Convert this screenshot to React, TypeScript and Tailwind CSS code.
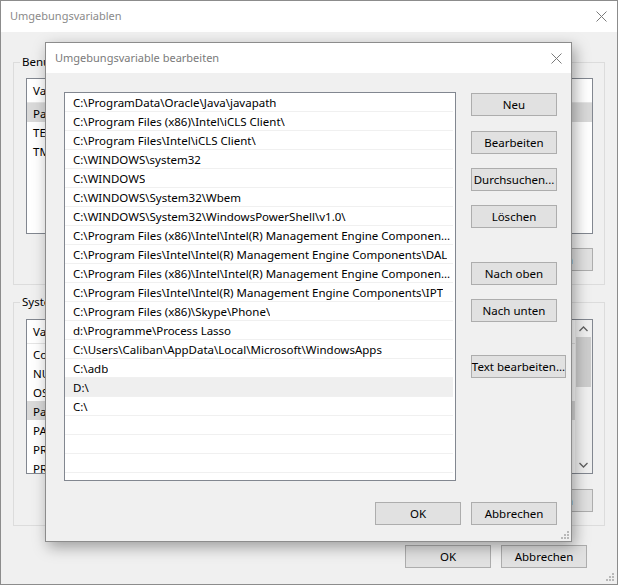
import React from "react";

const font = "font-['Segoe_UI','Noto_Sans',sans-serif]";

function CloseX() {
  return (
    <svg width="11" height="11" viewBox="0 0 11 11">
      <path d="M0.5 0.5 L10.5 10.5 M10.5 0.5 L0.5 10.5" stroke="#7a7a7a" strokeWidth="1" fill="none" />
    </svg>
  );
}

function Grip() {
  return (
    <svg width="8" height="8" viewBox="0 0 8 8">
      {[
        [6, 0],
        [6, 3],
        [3, 3],
        [6, 6],
        [3, 6],
        [0, 6],
      ].map(([x, y], i) => (
        <rect key={i} x={x} y={y} width="2" height="2" fill="#b8b8b8" />
      ))}
    </svg>
  );
}

function Btn({ children, className = "" }: { children: React.ReactNode; className?: string }) {
  return (
    <div
      className={
        "h-[23px] border border-[#adadad] bg-[#e1e1e1] text-[11.5px] text-black flex items-center justify-center whitespace-nowrap shrink-0 " +
        className
      }
    >
      {children}
    </div>
  );
}

const paths = [
  "C:\\ProgramData\\Oracle\\Java\\javapath",
  "C:\\Program Files (x86)\\Intel\\iCLS Client\\",
  "C:\\Program Files\\Intel\\iCLS Client\\",
  "C:\\WINDOWS\\system32",
  "C:\\WINDOWS",
  "C:\\WINDOWS\\System32\\Wbem",
  "C:\\WINDOWS\\System32\\WindowsPowerShell\\v1.0\\",
  "C:\\Program Files (x86)\\Intel\\Intel(R) Management Engine Components\\DAL",
  "C:\\Program Files\\Intel\\Intel(R) Management Engine Components\\DAL",
  "C:\\Program Files (x86)\\Intel\\Intel(R) Management Engine Components\\IPT",
  "C:\\Program Files\\Intel\\Intel(R) Management Engine Components\\IPT",
  "C:\\Program Files (x86)\\Skype\\Phone\\",
  "d:\\Programme\\Process Lasso",
  "C:\\Users\\Caliban\\AppData\\Local\\Microsoft\\WindowsApps",
  "C:\\adb",
  "D:\\",
  "C:\\",
  "",
  "",
  "",
  "",
];

const userVars = [
  ["Path", "C:\\Users\\Caliban\\AppData\\Local\\Microsoft\\WindowsApps;"],
  ["TEMP", "%USERPROFILE%\\AppData\\Local\\Temp"],
  ["TMP", "%USERPROFILE%\\AppData\\Local\\Temp"],
];

const sysVars = [
  ["ComSpec", "C:\\WINDOWS\\system32\\cmd.exe"],
  ["NUMBER_OF_PROCESSORS", "8"],
  ["OS", "Windows_NT"],
  ["Path", "C:\\ProgramData\\Oracle\\Java\\javapath;C:\\Program Files (x86)..."],
  ["PATHEXT", ".COM;.EXE;.BAT;.CMD;.VBS;.VBE;.JS;.JSE;.WSF;.WSH;.MSC"],
  ["PROCESSOR_ARCHITECTURE", "AMD64"],
  ["PROCESSOR_IDENTIFIER", "Intel64 Family 6 Model 60 Stepping 3, GenuineIntel"],
];

function VarList({ rows, selected, scroll, h }: { rows: string[][]; selected: number; scroll?: boolean; h: string }) {
  return (
    <div className={"ml-[12px] w-[567px] border border-[#828790] bg-white flex overflow-hidden " + h}>
      <div className="flex-1 flex flex-col min-w-0">
        <div className="h-[24px] shrink-0 flex items-center text-[11.5px] text-black border-b border-[#e5e5e5]">
          <div className="w-[170px] pl-[6px] border-r border-[#e5e5e5] h-full flex items-center">Variable</div>
          <div className="pl-[6px]">Wert</div>
        </div>
        {rows.map(([k, v], i) => (
          <div
            key={i}
            className={
              "h-[19px] shrink-0 flex items-center pt-[2px] text-[11.5px] text-black whitespace-nowrap " +
              (i === selected ? "bg-[#d9d9d9]" : "")
            }
          >
            <div className="w-[170px] pl-[6px]">{k}</div>
            <div className="pl-[6px] overflow-hidden text-ellipsis">{v}</div>
          </div>
        ))}
      </div>
      {scroll && (
        <div className="w-[17px] shrink-0 bg-[#f0f0f0] flex flex-col items-center">
          <div className="h-[17px] flex items-center justify-center">
            <svg width="9" height="6" viewBox="0 0 9 6">
              <path d="M0.5 5 L4.5 1 L8.5 5" stroke="#606060" strokeWidth="1.3" fill="none" />
            </svg>
          </div>
          <div className="w-[15px] h-[50px] bg-[#cdcdcd]" />
          <div className="flex-1" />
          <div className="h-[17px] flex items-center justify-center">
            <svg width="9" height="6" viewBox="0 0 9 6">
              <path d="M0.5 1 L4.5 5 L8.5 1" stroke="#606060" strokeWidth="1.3" fill="none" />
            </svg>
          </div>
        </div>
      )}
    </div>
  );
}

export default function App() {
  return (
    <div className={"relative w-[618px] h-[585px] bg-[#f0f0f0] border border-[#8c8c8c] overflow-hidden text-[11.5px] " + font}>
      {/* Back window */}
      <div className="h-[31px] bg-white flex items-center pl-[9px] pr-[10px]">
        <span className="text-[11px] text-[#8a8a8a]">Umgebungsvariablen</span>
        <div className="ml-auto flex items-center">
          <CloseX />
        </div>
      </div>

      <fieldset className="ml-[12px] mt-[22px] w-[592px] border border-[#dcdcdc] p-0 pb-[13px]">
        <legend className="ml-[6px] px-[2px] leading-[16px] text-[11.5px] text-black">Benutzervariablen für Caliban</legend>
        <div className="mt-[8px]">
          <VarList rows={userVars} selected={0} h="h-[156px]" />
        </div>
        <div className="mt-[14px] flex justify-end gap-[10px] pr-[11px]">
          <Btn className="w-[85px]">Neu...</Btn>
          <Btn className="w-[85px]">Bearbeiten...</Btn>
          <Btn className="w-[85px]">Löschen</Btn>
        </div>
      </fieldset>

      <fieldset className="ml-[12px] mt-[9px] w-[592px] border border-[#dcdcdc] p-0 pb-[13px]">
        <legend className="ml-[6px] px-[2px] leading-[16px] text-[11.5px] text-black">Systemvariablen</legend>
        <div className="mt-[9px]">
          <VarList rows={sysVars} selected={3} scroll h="h-[155px]" />
        </div>
        <div className="mt-[15px] flex justify-end gap-[10px] pr-[11px]">
          <Btn className="w-[85px]">Neu...</Btn>
          <Btn className="w-[85px]">Bearbeiten...</Btn>
          <Btn className="w-[85px]">Löschen</Btn>
        </div>
      </fieldset>

      <div className="mt-[19px] flex justify-end gap-[10px] pr-[30px]">
        <Btn className="w-[86px]">OK</Btn>
        <Btn className="w-[86px]">Abbrechen</Btn>
      </div>
      <div className="absolute right-[3px] bottom-[3px]">
        <Grip />
      </div>

      {/* Front dialog */}
      <div className="absolute left-[44px] top-[41px] w-[527px] h-[500px] bg-[#f0f0f0] border border-[#8c8c8c] shadow-[3px_5px_14px_rgba(0,0,0,0.35)] flex flex-col">
        <div className="h-[30px] shrink-0 bg-white flex items-center pl-[9px] pr-[9px]">
          <span className="text-[11px] text-[#7a7a7a]">Umgebungsvariable bearbeiten</span>
          <div className="ml-auto flex items-center">
            <CloseX />
          </div>
        </div>
        <div className="flex pl-[18px] pt-[19px]">
          <div className="w-[392px] h-[389px] border border-[#828790] bg-white flex flex-col overflow-hidden shrink-0">
            {paths.map((p, i) => (
              <div
                key={i}
                className={
                  "h-[19px] shrink-0 mr-[2px] flex items-center pt-[2px] pl-[8px] pr-[1px] text-[11.5px] text-black border-b border-[#f0f0f0] " +
                  (p === "D:\\" ? "bg-[#efefef]" : "")
                }
              >
                <span className="overflow-hidden whitespace-nowrap text-ellipsis">{p}</span>
              </div>
            ))}
          </div>
          <div className="ml-[15px] flex flex-col items-start">
            <Btn className="w-[86px] mt-[1px]">Neu</Btn>
            <Btn className="w-[86px] mt-[15px]">Bearbeiten</Btn>
            <Btn className="w-[86px] mt-[14px]">Durchsuchen...</Btn>
            <Btn className="w-[86px] mt-[14px]">Löschen</Btn>
            <Btn className="w-[86px] mt-[34px]">Nach oben</Btn>
            <Btn className="w-[86px] mt-[14px]">Nach unten</Btn>
            <Btn className="w-[95px] mt-[33px]">Text bearbeiten...</Btn>
          </div>
        </div>
        <div className="mt-[21px] flex justify-end gap-[10px] pr-[14px]">
          <Btn className="w-[86px]">OK</Btn>
          <Btn className="w-[86px]">Abbrechen</Btn>
        </div>
        <div className="absolute right-[2px] bottom-[2px]">
          <Grip />
        </div>
      </div>
    </div>
  );
}
